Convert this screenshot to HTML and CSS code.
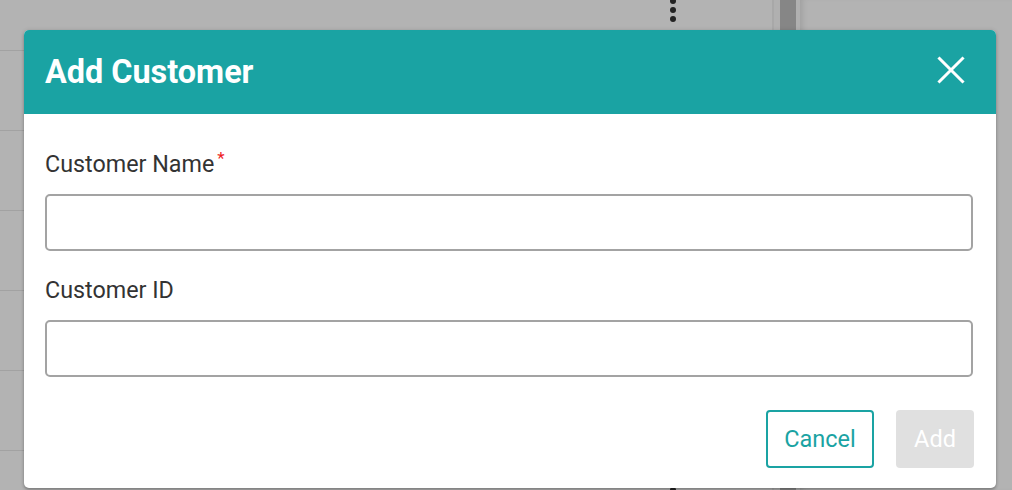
FILE: index.html
```html
<!DOCTYPE html>
<html lang="en">
<head>
<meta charset="utf-8">
<title>Add Customer</title>
<link rel="stylesheet" href="styles.css">
</head>
<body>
<div class="page">
  <div class="table">
    <div class="row"><span class="kebab"><i></i><i></i><i></i></span></div>
    <div class="row"><span class="kebab"><i></i><i></i><i></i></span></div>
    <div class="row"><span class="kebab"><i></i><i></i><i></i></span></div>
    <div class="row"><span class="kebab"><i></i><i></i><i></i></span></div>
    <div class="row"><span class="kebab"><i></i><i></i><i></i></span></div>
    <div class="row"><span class="kebab"><i></i><i></i><i></i></span></div>
    <div class="row"><span class="kebab"><i></i><i></i><i></i></span></div>
  </div>
  <div class="divider"></div>
  <div class="track"><div class="thumb"></div></div>
  <div class="side"></div>

  <div class="dialog" role="dialog" aria-labelledby="dlg-title">
    <div class="dialog-header">
      <h2 id="dlg-title" class="dialog-title">Add Customer</h2>
      <button class="close-btn" aria-label="Close">
        <svg width="28" height="28" viewBox="0 0 28 28" aria-hidden="true">
          <path d="M2.5 2.5 L25.5 25.5 M25.5 2.5 L2.5 25.5" stroke="#ffffff" stroke-width="3" stroke-linecap="square" fill="none"/>
        </svg>
      </button>
    </div>
    <div class="dialog-body">
      <label class="field-label" for="cname">Customer Name<span class="req">*</span></label>
      <input class="field-input" id="cname" type="text">
      <label class="field-label second" for="cid">Customer ID</label>
      <input class="field-input" id="cid" type="text">
      <div class="actions">
        <button class="btn btn-cancel">Cancel</button>
        <button class="btn btn-add" disabled>Add</button>
      </div>
    </div>
  </div>
</div>
</body>
</html>
```

FILE: styles.css
```css
* { box-sizing: border-box; }

html, body {
  margin: 0;
  padding: 0;
  width: 1012px;
  height: 490px;
  overflow: hidden;
  background: #b3b3b3;
  font-family: Roboto, "Liberation Sans", Arial, sans-serif;
}

.page {
  position: relative;
  width: 1012px;
  height: 490px;
  display: flex;
  overflow: hidden;
  background: #b3b3b3;
}

.table {
  flex: 0 0 772px;
  margin-top: -29px;
  display: flex;
  flex-direction: column;
}

.row {
  flex: 0 0 80px;
  border-bottom: 1px solid #a2a2a2;
  display: flex;
  align-items: center;
  padding-left: 670px;
  padding-bottom: 2px;
}

.kebab {
  display: flex;
  flex-direction: column;
  gap: 3px;
}

.kebab i {
  display: block;
  width: 6px;
  height: 6px;
  border-radius: 50%;
  background: #232323;
}

.divider {
  flex: 0 0 2px;
  background: #a8a8a8;
}

.track {
  flex: 0 0 26px;
  background: #b0b0b0;
  padding-left: 6px;
  display: flex;
}

.thumb {
  width: 16px;
  background: #868686;
}

.side {
  flex: 1;
  background: #b3b3b3;
  box-shadow: inset 6px 0 6px -4px rgba(0, 0, 0, 0.12);
}

/* dialog overlays the page */
.dialog {
  position: absolute;
  left: 24px;
  top: 30px;
  width: 972px;
  height: 458px;
  background: #ffffff;
  border-radius: 5px;
  overflow: hidden;
  box-shadow: 0 2px 3px rgba(0, 0, 0, 0.25), 0 0 4px rgba(0, 0, 0, 0.12);
  display: flex;
  flex-direction: column;
}

.dialog-header {
  flex: 0 0 84px;
  background: #1aa3a3;
  display: flex;
  align-items: center;
  justify-content: space-between;
  padding: 0 31px 0 21px;
}

.dialog-title {
  margin: 0;
  color: #ffffff;
  font-size: 32.4px;
  font-weight: 700;
  line-height: normal;
}

.close-btn {
  border: 0;
  background: transparent;
  padding: 0;
  margin-top: -4px;
  width: 28px;
  height: 28px;
  display: flex;
}

.dialog-body {
  flex: 1;
  display: flex;
  flex-direction: column;
  padding: 36px 23px 20px 21px;
}

.field-label {
  display: block;
  font-size: 23.3px;
  line-height: 28px;
  color: #333333;
}

.field-label.second {
  margin-top: 25px;
}

.req {
  color: #ee1c25;
  font-size: 17px;
  line-height: 16px;
  vertical-align: top;
  margin-left: 3px;
}

.field-input {
  display: block;
  width: 100%;
  height: 57px;
  margin-top: 16px;
  border: 2px solid #a3a3a3;
  border-radius: 5px;
  background: #ffffff;
  font-size: 22px;
  font-family: inherit;
  padding: 0 12px;
  outline: none;
}

.actions {
  margin-top: 33px;
  display: flex;
  justify-content: flex-end;
  gap: 22px;
  margin-right: -1px;
}

.btn {
  height: 58px;
  border-radius: 4px;
  font-family: inherit;
  font-size: 23.5px;
  display: flex;
  align-items: center;
  justify-content: center;
  padding: 0;
}

.btn-cancel {
  width: 108px;
  background: #ffffff;
  border: 2px solid #1aa3a3;
  color: #1aa3a3;
}

.btn-add {
  width: 78px;
  background: #e0e0e0;
  border: 0;
  color: #ffffff;
}
```
